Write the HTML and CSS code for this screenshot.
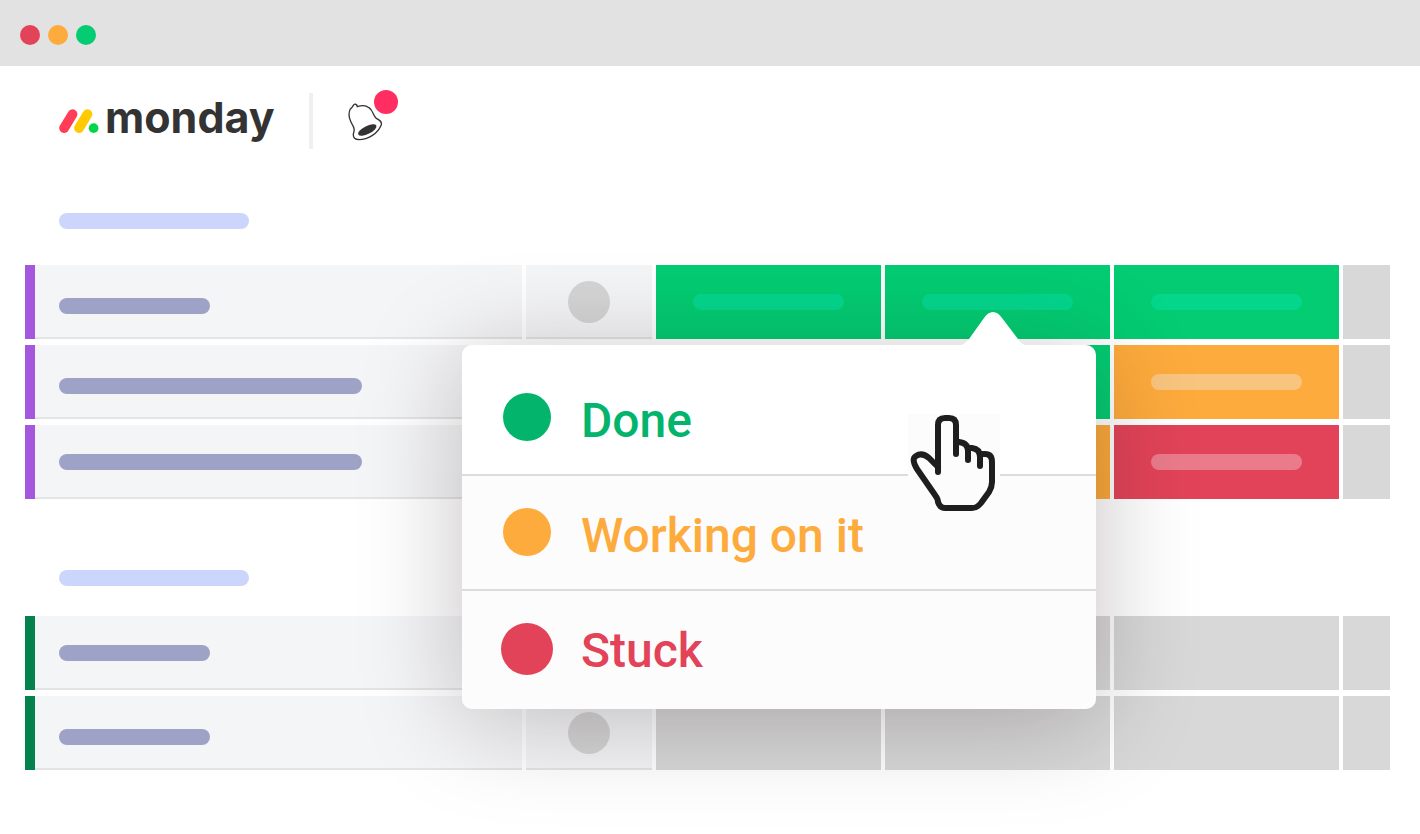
FILE: index.html
```
<!DOCTYPE html>
<html lang="en">
<head>
  <meta charset="UTF-8">
  <title>monday</title>
  <link rel="stylesheet" href="styles.css">
</head>
<body>
  <div class="window-bar">
    <span class="window-dot red"></span>
    <span class="window-dot orange"></span>
    <span class="window-dot green"></span>
  </div>

  <header class="header">
    <a href="#" class="logo">
      <svg class="logo-mark" viewBox="177 326 122 74" aria-hidden="true">
        <path d="M192 385L218 342" stroke="#ff3d57" stroke-width="30" stroke-linecap="round"/>
        <path d="M238 385L264 342" stroke="#ffcb00" stroke-width="30" stroke-linecap="round"/>
        <circle cx="283" cy="385" r="15" fill="#00d647"/>
      </svg>
      <span>monday</span>
    </a>
    <span class="divider"></span>
    <button type="button" class="bell" aria-label="Notifications">
      <svg viewBox="36 64 108 117" aria-hidden="true">
        <path d="M67 78C66 70 58 68 55 74C53 80 50 80 46 85C38 100 44 118 52 132C60 145 58 150 55 160C54 172 60 177 72 177C98 177 128 160 139 132C141 122 134 118 124 113C115 107 115 90 102 81C92 73 78 74 67 78Z" fill="#fff" stroke="#333" stroke-width="4"/>
        <ellipse cx="97" cy="148" rx="30" ry="12" transform="rotate(-26 97 148)" fill="#333"/>
      </svg>
      <span class="badge"></span>
    </button>
  </header>

  <main class="board">
    <!-- First group -->
    <section class="group purple-group">
      <div class="group-title"></div>
      <div class="row">
        <div class="cell name low"><span class="line short"></span></div>
        <div class="cell person"><span class="avatar"></span></div>
        <div class="cell done"><span class="pill"></span></div>
        <div class="cell done open">
          <span class="pill"></span>
          <!-- Status menu -->
          <div class="menu">
            <svg class="menu-arrow" viewBox="0 0 70 34" aria-hidden="true">
              <path d="M0 34Q6 33 11 27L26 6C31 -2 39 -2 44 6L60 27Q64 33 70 34Z" fill="#fff"/>
            </svg>
            <button type="button" class="menu-item text-done"><span class="dot"></span>Done</button>
            <button type="button" class="menu-item text-working"><span class="dot"></span>Working on it</button>
            <button type="button" class="menu-item text-stuck"><span class="dot large"></span>Stuck</button>
            <svg class="cursor" viewBox="8 14 92 98" aria-hidden="true">
              <path d="M38 72V25Q38 18 45 18H49Q56 18 56 25V54V42H59Q68 43 68 51V60V48H72Q80 49 80 57V66V54H85Q92 54 92 62V82Q92 87 89 92L81 103Q77 108 72 108H45Q40 108 38 102Q38 99 35 95L17 69Q11 59 16 56Q22 52 29 58L38 67" fill="#fcfcfc" stroke="#1e1e1e" stroke-width="6" stroke-linecap="round" stroke-linejoin="round"/>
            </svg>
          </div>
        </div>
        <div class="cell done"><span class="pill"></span></div>
        <div class="cell empty"></div>
      </div>
      <div class="row">
        <div class="cell name low"><span class="line long"></span></div>
        <div class="cell person"><span class="avatar"></span></div>
        <div class="cell done"><span class="pill"></span></div>
        <div class="cell done"><span class="pill"></span></div>
        <div class="cell working"><span class="pill"></span></div>
        <div class="cell empty"></div>
      </div>
      <div class="row">
        <div class="cell name"><span class="line long"></span></div>
        <div class="cell person"><span class="avatar"></span></div>
        <div class="cell done"><span class="pill"></span></div>
        <div class="cell working"><span class="pill"></span></div>
        <div class="cell stuck"><span class="pill"></span></div>
        <div class="cell empty"></div>
      </div>
    </section>

    <!-- Second group -->
    <section class="group green-group">
      <div class="group-title"></div>
      <div class="row">
        <div class="cell name"><span class="line short"></span></div>
        <div class="cell person"><span class="avatar"></span></div>
        <div class="cell empty"></div>
        <div class="cell empty"></div>
        <div class="cell empty"></div>
        <div class="cell empty"></div>
      </div>
      <div class="row">
        <div class="cell name low"><span class="line short"></span></div>
        <div class="cell person"><span class="avatar"></span></div>
        <div class="cell empty"></div>
        <div class="cell empty"></div>
        <div class="cell empty"></div>
        <div class="cell empty"></div>
      </div>
    </section>
  </main>
</body>
</html>
```
FILE: styles.css
```
* {
  box-sizing: border-box;
}
body {
  margin: 0;
  background: #fff;
  font-family: Roboto, Arial, sans-serif;
}
button {
  padding: 0;
  border: none;
  background: none;
  font: inherit;
  cursor: pointer;
}

/* Window bar */
.window-bar {
  display: flex;
  align-items: center;
  gap: 8px;
  height: 66px;
  padding: 4px 20px 0;
  background: #e2e2e2;
}
.window-dot {
  width: 20px;
  height: 20px;
  border-radius: 50%;
}
.red {
  background: #e24358;
}
.orange {
  background: #fdab3c;
}
.green {
  background: #03cc72;
}

/* Header */
.header {
  display: flex;
  align-items: center;
  gap: 34px;
  padding: 27px 59px 0;
}
.logo {
  display: flex;
  align-items: baseline;
  align-self: flex-start;
  gap: 6px;
  color: #333;
  font-family: Inter, sans-serif;
  font-size: 43px;
  font-weight: 700;
  line-height: 48px;
  text-decoration: none;
}
.logo-mark {
  width: 40px;
  height: 24px;
}
.divider {
  width: 4px;
  height: 56px;
  background: #f0f0f0;
}
.bell {
  position: relative;
}
.bell svg {
  display: block;
  width: 36px;
  height: 39px;
}
.badge {
  position: absolute;
  top: -12px;
  right: -15px;
  width: 24px;
  height: 24px;
  border-radius: 50%;
  background: #ff2d62;
}

/* Board */
.board {
  display: flex;
  flex-direction: column;
  gap: 71px;
  padding: 64px 30px 64px 25px;
}
.group {
  display: flex;
  flex-direction: column;
  gap: 6px;
}
.group-title {
  width: 190px;
  height: 16px;
  margin: 0 0 30px 34px;
  border-radius: 8px;
  background: #ccd5fb;
}
.green-group .group-title {
  margin-bottom: 24px;
}
.row {
  display: grid;
  grid-template-columns: 497fr 126fr 225fr 225fr 225fr 47fr;
  gap: 4px;
  height: 74px;
}
.cell {
  display: flex;
  align-items: center;
  justify-content: center;
}
.name {
  justify-content: flex-start;
  padding-left: 24px;
  border-left: 10px solid #a456dd;
  background: #f4f5f7;
  box-shadow: inset 0 -2px #e4e4e5;
}
.green-group .name {
  border-left-color: #03824e;
}
.low {
  padding-top: 8px;
}
.person {
  background: #f4f5f7;
  box-shadow: inset 0 -2px #e4e4e5;
}
.line {
  height: 16px;
  border-radius: 8px;
  background: #9ea2c6;
}
.short {
  width: 151px;
}
.long {
  width: 303px;
}
.avatar {
  width: 42px;
  height: 42px;
  border-radius: 50%;
  background: #d5d5d5;
}
.pill {
  width: 151px;
  height: 16px;
  border-radius: 8px;
}
.done {
  background: #03cc72;
}
.done .pill {
  background: #04d68c;
}
.working {
  background: #fdab3c;
}
.working .pill {
  background: #f8c47e;
}
.stuck {
  background: #e24358;
}
.stuck .pill {
  background: #ea7b8b;
}
.empty {
  background: #d8d8d8;
}

/* Status menu */
.open {
  position: relative;
}
.menu {
  position: absolute;
  top: 80px;
  right: 14px;
  z-index: 1;
  width: 634px;
  padding: 16px 0 5px;
  border-radius: 10px;
  background: linear-gradient(#fff 130px, #fcfcfc 130px);
  box-shadow: 0 12px 100px rgba(30, 15, 20, 0.26);
}
.menu-arrow {
  position: absolute;
  top: -33px;
  right: 68px;
  width: 70px;
  height: 34px;
}
.menu-item {
  display: flex;
  align-items: flex-start;
  gap: 28px;
  width: 100%;
  padding: 32px 39px 25px;
  font-size: 48px;
  font-weight: 500;
  line-height: 56px;
}
.menu-item + .menu-item {
  border-top: 2px solid #dcdcdc;
}
.text-done {
  color: #03b56c;
}
.text-working {
  color: #fdab3c;
}
.text-stuck {
  color: #e24358;
}
.dot {
  width: 48px;
  height: 48px;
  margin: 0 2px;
  border-radius: 50%;
  background: currentColor;
}
.large {
  width: 52px;
  height: 52px;
  margin: 0;
}
.cursor {
  position: absolute;
  top: 69px;
  right: 96px;
  width: 92px;
  height: 98px;
  background: #fcfcfc;
}
```
